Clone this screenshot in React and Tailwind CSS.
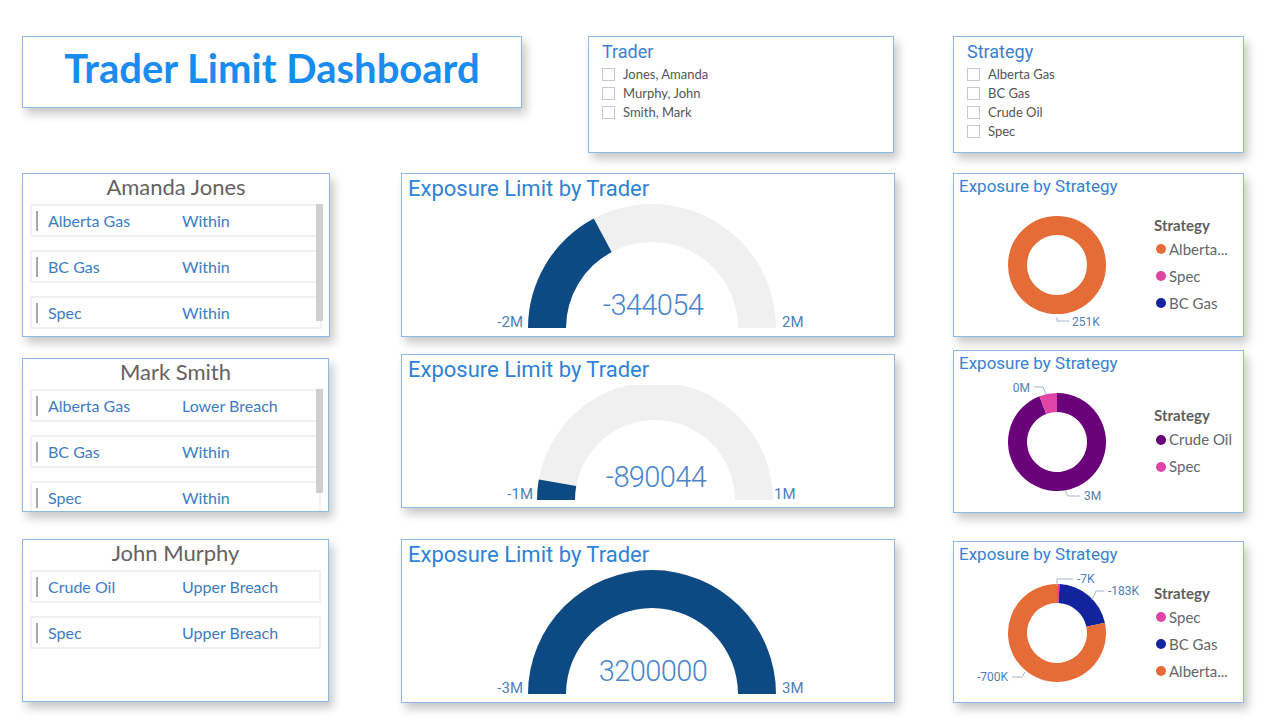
import React from "react";

const SEGOE = "font-['Lato','Open_Sans',sans-serif]";
const DIN = "font-['Roboto','Liberation_Sans',sans-serif]";

const Card = ({ className = "", children }) => (
  <div
    className={`relative bg-white border border-[#8db9e2] shadow-[4px_6px_9px_rgba(0,0,0,0.22)] overflow-hidden ${className}`}
  >
    {children}
  </div>
);

const Checkbox = () => (
  <span className="w-[13px] h-[13px] border border-[#c8c8c8] bg-white shrink-0" />
);

const Slicer = ({ title, items, className }) => (
  <Card className={`pl-[13px] pt-[3px] ${className}`}>
    <div className={`${DIN} text-[18px] leading-[24px] text-[#3a80d2]`}>{title}</div>
    <div className="mt-[1px] flex flex-col">
      {items.map((item) => (
        <div key={item} className="flex items-center h-[19px]">
          <Checkbox />
          <span className={`${SEGOE} ml-[8px] text-[13px] text-[#555]`}>{item}</span>
        </div>
      ))}
    </div>
  </Card>
);

const TraderCard = ({ name, rows, scroll, className }) => (
  <Card className={className}>
    <div
      className={`${SEGOE} h-[30px] pb-[5px] flex items-center justify-center text-[22px] text-[#66615f]`}
    >
      {name}
    </div>
    <div className="flex flex-col gap-[13px]">
      {rows.map(([strategy, status]) => (
        <div
          key={strategy}
          className="mx-[7px] h-[33px] shrink-0 border-2 border-[#f1f1f1] flex items-center"
        >
          <span className="ml-[4px] w-[2px] h-[20px] bg-[#a9a9a9]" />
          <span className={`${SEGOE} ml-[10px] w-[134px] text-[16px] text-[#3d7cc4]`}>
            {strategy}
          </span>
          <span className={`${SEGOE} text-[16px] text-[#3d7cc4]`}>{status}</span>
        </div>
      ))}
    </div>
    {scroll && (
      <div
        className="absolute left-[293px] top-[30px] w-[7px] bg-[#cfcfcf]"
        style={{ height: scroll }}
      />
    )}
  </Card>
);

const pt = (cx, cy, rad, t) => {
  const a = (t * Math.PI) / 180;
  return [cx - rad * Math.cos(a), cy - rad * Math.sin(a)];
};

const gaugeArc = (cx, cy, R, r, t0, t1) => {
  const e = Math.min(t1, 179.999);
  const [x0, y0] = pt(cx, cy, R, t0);
  const [x1, y1] = pt(cx, cy, R, e);
  const [x2, y2] = pt(cx, cy, r, e);
  const [x3, y3] = pt(cx, cy, r, t0);
  return `M${x0} ${y0} A${R} ${R} 0 0 1 ${x1} ${y1} L${x2} ${y2} A${r} ${r} 0 0 0 ${x3} ${y3} Z`;
};

const GaugeCard = ({ value, sweep, minLabel, maxLabel, cx, cy, R, r, h, labelL, labelR, className }) => (
  <Card className={className}>
    <div className={`${DIN} h-[30px] leading-[30px] pl-[6px] text-[22px] text-[#2f82d6]`}>
      Exposure Limit by Trader
    </div>
    <svg width="492" height={h} className="block">
      <path d={gaugeArc(cx, cy, R, r, 0, 180)} fill="#f0f0f0" />
      {sweep > 0 && <path d={gaugeArc(cx, cy, R, r, 0, sweep)} fill="#0d4a84" />}
      <text
        x={cx + 1}
        y={cy - 13}
        textAnchor="middle"
        fill="#4a86cc"
        fontFamily="Roboto, sans-serif"
        fontWeight="300"
        fontSize="29"
        letterSpacing="-0.6"
      >
        {value}
      </text>
      <text x={labelL} y={cy - 1} textAnchor="end" fill="#4f7fb8" fontFamily="Roboto, sans-serif" fontSize="15">
        {minLabel}
      </text>
      <text x={labelR} y={cy - 1} fill="#4f7fb8" fontFamily="Roboto, sans-serif" fontSize="15">
        {maxLabel}
      </text>
    </svg>
  </Card>
);

const dpt = (cx, cy, rad, th) => {
  const a = (th * Math.PI) / 180;
  return [cx + rad * Math.sin(a), cy - rad * Math.cos(a)];
};

const slice = (cx, cy, R, r, a0, a1) => {
  const large = a1 - a0 > 180 ? 1 : 0;
  const [x0, y0] = dpt(cx, cy, R, a0);
  const [x1, y1] = dpt(cx, cy, R, a1);
  const [x2, y2] = dpt(cx, cy, r, a1);
  const [x3, y3] = dpt(cx, cy, r, a0);
  return `M${x0} ${y0} A${R} ${R} 0 ${large} 1 ${x1} ${y1} L${x2} ${y2} A${r} ${r} 0 ${large} 0 ${x3} ${y3} Z`;
};

const DonutCard = ({ slices, labels, legend, className }) => {
  const cx = 103;
  const cy = 67;
  const R = 49;
  const r = 30;
  return (
    <Card className={className}>
      <div className={`${DIN} h-[24px] leading-[24px] pl-[5px] text-[17px] text-[#3a80d2]`}>
        Exposure by Strategy
      </div>
      <div className="flex">
        <svg width="200" height="136" className="block shrink-0">
          {slices.map((s, i) =>
            s.full ? (
              <circle key={i} cx={cx} cy={cy} r={(R + r) / 2} fill="none" stroke={s.color} strokeWidth={R - r} />
            ) : (
              <path key={i} d={slice(cx, cy, R, r, s.from, s.to)} fill={s.color} />
            )
          )}
          {labels.map((l, i) => (
            <g key={i}>
              <polyline points={l.line} fill="none" stroke="#a7b6c8" strokeWidth="1" />
              <text
                x={l.x}
                y={l.y}
                textAnchor={l.end ? "end" : "start"}
                fill="#4f7fb8"
                fontFamily="Roboto, sans-serif"
                fontSize="12"
              >
                {l.text}
              </text>
            </g>
          ))}
        </svg>
        <div className="flex flex-col justify-center h-[134px]">
          <div className={`${SEGOE} font-bold text-[15px] leading-[22px] text-[#605e5c]`}>Strategy</div>
          {legend.map(([label, color]) => (
            <div key={label} className="flex items-center h-[27px]">
              <span className="ml-[2px] w-[10px] h-[10px] rounded-full" style={{ backgroundColor: color }} />
              <span className={`${SEGOE} ml-[3px] text-[15px] text-[#666]`}>{label}</span>
            </div>
          ))}
        </div>
      </div>
    </Card>
  );
};

const ORANGE = "#e66c37";
const PINK = "#e044a7";
const NAVY = "#12239e";
const PURPLE = "#6b007b";

export default function App() {
  return (
    <div className="w-[1280px] h-[720px] bg-white overflow-hidden">
      <div className="flex items-start pt-[36px]">
        <Card className="ml-[22px] w-[500px] h-[72px] flex items-center justify-center">
          <h1 className={`${SEGOE} font-bold text-[40px] leading-[50px] text-[#1a8cf0] -mt-[8px]`}>
            Trader Limit Dashboard
          </h1>
        </Card>
        <Slicer
          title="Trader"
          items={["Jones, Amanda", "Murphy, John", "Smith, Mark"]}
          className="ml-[66px] w-[306px] h-[117px]"
        />
        <Slicer
          title="Strategy"
          items={["Alberta Gas", "BC Gas", "Crude Oil", "Spec"]}
          className="ml-[59px] w-[291px] h-[117px]"
        />
      </div>

      <div className="flex items-start mt-[20px]">
        <TraderCard
          name="Amanda Jones"
          rows={[
            ["Alberta Gas", "Within"],
            ["BC Gas", "Within"],
            ["Spec", "Within"],
          ]}
          scroll={117}
          className="ml-[22px] w-[308px] h-[164px]"
        />
        <GaugeCard
          value={-344054}
          sweep={62}
          minLabel="-2M"
          maxLabel="2M"
          cx={250}
          cy={124}
          R={124}
          r={86}
          h={132}
          labelL={121}
          labelR={380}
          className="ml-[71px] w-[494px] h-[164px]"
        />
        <DonutCard
          slices={[{ full: true, color: ORANGE }]}
          labels={[{ line: "103,119 103,123 115,123", x: 118, y: 128, text: "251K" }]}
          legend={[
            ["Alberta...", ORANGE],
            ["Spec", PINK],
            ["BC Gas", NAVY],
          ]}
          className="ml-[58px] w-[291px] h-[164px]"
        />
      </div>

      <div className="flex items-start mt-[13px]">
        <TraderCard
          name="Mark Smith"
          rows={[
            ["Alberta Gas", "Lower Breach"],
            ["BC Gas", "Within"],
            ["Spec", "Within"],
          ]}
          scroll={104}
          className="ml-[22px] mt-[8px] w-[307px] h-[154px]"
        />
        <GaugeCard
          value={-890044}
          sweep={10}
          minLabel="-1M"
          maxLabel="1M"
          cx={253}
          cy={115}
          R={118}
          r={80}
          h={122}
          labelL={131}
          labelR={372}
          className="ml-[72px] mt-[4px] w-[494px] h-[154px]"
        />
        <DonutCard
          slices={[
            { from: 0, to: 339, color: PURPLE },
            { from: 339, to: 360, color: PINK },
          ]}
          labels={[
            { line: "80,12 89,12 92,19", x: 76, y: 17, text: "0M", end: true },
            { line: "111,115 114,121 126,121", x: 130, y: 125, text: "3M" },
          ]}
          legend={[
            ["Crude Oil", PURPLE],
            ["Spec", PINK],
          ]}
          className="ml-[58px] w-[291px] h-[163px]"
        />
      </div>

      <div className="flex items-start mt-[26px]">
        <TraderCard
          name="John Murphy"
          rows={[
            ["Crude Oil", "Upper Breach"],
            ["Spec", "Upper Breach"],
          ]}
          className="ml-[22px] w-[307px] h-[163px]"
        />
        <GaugeCard
          value={3200000}
          sweep={180}
          minLabel="-3M"
          maxLabel="3M"
          cx={250}
          cy={124}
          R={124}
          r={86}
          h={132}
          labelL={121}
          labelR={380}
          className="ml-[72px] w-[494px] h-[164px]"
        />
        <DonutCard
          slices={[
            { from: 0, to: 3, color: PINK },
            { from: 3, to: 78, color: NAVY },
            { from: 78, to: 360, color: ORANGE },
          ]}
          labels={[
            { line: "103,20 103,13 119,13", x: 123, y: 17, text: "-7K" },
            { line: "138,34 142,25 150,25", x: 154, y: 29, text: "-183K" },
            { line: "58,111 68,111 71,106", x: 54, y: 115, text: "-700K", end: true },
          ]}
          legend={[
            ["Spec", PINK],
            ["BC Gas", NAVY],
            ["Alberta...", ORANGE],
          ]}
          className="ml-[58px] mt-[2px] w-[291px] h-[162px]"
        />
      </div>
    </div>
  );
}
